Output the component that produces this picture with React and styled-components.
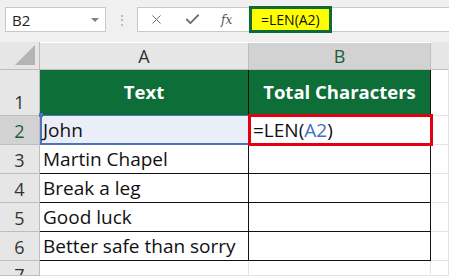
import React from "react";
import styled, { createGlobalStyle } from "styled-components";
import { X, Check } from "lucide-react";

const GlobalStyle = createGlobalStyle`
  html, body {
    margin: 0;
    padding: 0;
    background: #ffffff;
  }
  body {
    width: 449px;
    height: 276px;
    overflow: hidden;
    font-family: "Open Sans", "Liberation Sans", sans-serif;
  }
`;

const rows = [
  { n: 2, text: "John", active: true },
  { n: 3, text: "Martin Chapel" },
  { n: 4, text: "Break a leg" },
  { n: 5, text: "Good luck" },
  { n: 6, text: "Better safe than sorry" },
];

function App() {
  return (
    <Page>
      <GlobalStyle />
      <Toolbar>
        <NameBox>
          B2
          <Caret />
        </NameBox>
        <Dots>⋮</Dots>
        <FormulaBox>
          <ToolIcon>
            <X size={15} strokeWidth={1.6} />
          </ToolIcon>
          <ToolIcon>
            <Check size={17} strokeWidth={2.6} />
          </ToolIcon>
          <Fx>fx</Fx>
          <FormulaText>=LEN(A2)</FormulaText>
        </FormulaBox>
      </Toolbar>
      <Sheet>
        <Corner>
          <Triangle />
        </Corner>
        <ColHeader>A</ColHeader>
        <ColHeader selected>B</ColHeader>
        <ColHeader rest />

        <RowHeader>1</RowHeader>
        <HeadCell>Text</HeadCell>
        <HeadCell last>Total Characters</HeadCell>
        <Blank />

        {rows.map((r) => (
          <React.Fragment key={r.n}>
            <RowHeader selected={r.active}>{r.n}</RowHeader>
            {r.active ? (
              <RefCell>
                {r.text}
                <Handle />
              </RefCell>
            ) : (
              <Cell>{r.text}</Cell>
            )}
            {r.active ? (
              <EditCell>
                =LEN(<Ref>A2</Ref>)
              </EditCell>
            ) : (
              <Cell last />
            )}
            <Blank />
          </React.Fragment>
        ))}

        <RowHeader clipped>7</RowHeader>
        <Blank />
        <Blank />
        <Blank />
      </Sheet>
    </Page>
  );
}

export default App;

const Page = styled.div`
  width: 449px;
  height: 276px;
  display: flex;
  flex-direction: column;
  background: #f0f0f0;
  overflow: hidden;
`;

const Toolbar = styled.div`
  height: 42px;
  flex-shrink: 0;
  display: flex;
  align-items: flex-start;
  padding: 7px 0 0 5px;
  box-sizing: border-box;
`;

const NameBox = styled.div`
  width: 101px;
  height: 25px;
  box-sizing: border-box;
  background: #fff;
  border: 1px solid #c8c8c8;
  display: flex;
  align-items: center;
  padding-left: 6px;
  font-size: 15px;
  color: #222;
  position: relative;
`;

const Caret = styled.span`
  position: absolute;
  right: 6px;
  top: 10px;
  border-left: 4px solid transparent;
  border-right: 4px solid transparent;
  border-top: 4px solid #808080;
`;

const Dots = styled.div`
  width: 31px;
  text-align: center;
  color: #b0b0b0;
  font-size: 14px;
  line-height: 25px;
`;

const FormulaBox = styled.div`
  flex: 1;
  height: 25px;
  box-sizing: border-box;
  background: #fff;
  border: 1px solid #c8c8c8;
  border-right: none;
  display: flex;
  align-items: center;
  padding-left: 11px;
`;

const ToolIcon = styled.span`
  width: 35px;
  display: flex;
  align-items: center;
  color: #6f6f6f;
`;

const Fx = styled.span`
  font-family: "DejaVu Serif", "Liberation Serif", serif;
  font-style: italic;
  font-size: 12px;
  color: #555;
  width: 28px;
  padding-left: 2px;
`;

const FormulaText = styled.div`
  height: 27px;
  box-sizing: border-box;
  margin-top: -1px;
  background: #ffff00;
  border: 3px solid #0f6b36;
  padding: 0 9px 0 9px;
  display: flex;
  align-items: center;
  font-size: 14px;
  color: #111;
`;

const Sheet = styled.div`
  flex: 1;
  min-height: 0;
  overflow: hidden;
  display: grid;
  grid-template-columns: 40px 209px 182px 1fr;
  grid-template-rows: 28px 46px repeat(5, 29px) minmax(0, 1fr);
  font-family: "Open Sans", "Liberation Sans", sans-serif;
  background: #fff;
`;

const Corner = styled.div`
  background: #e6e6e6;
  border-right: 1px solid #bdbdbd;
  border-bottom: 1px solid #bdbdbd;
  position: relative;
`;

const Triangle = styled.div`
  position: absolute;
  right: 4px;
  bottom: 4px;
  width: 0;
  height: 0;
  border-left: 20px solid transparent;
  border-bottom: 20px solid #b4b4b4;
`;

const ColHeader = styled.div`
  background: ${(p) => (p.selected ? "#d2d2d2" : "#e6e6e6")};
  color: ${(p) => (p.selected ? "#1f5c3c" : "#333")};
  border-right: 1px solid ${(p) => (p.rest ? "transparent" : "#bdbdbd")};
  border-bottom: 1px solid #bdbdbd;
  display: flex;
  align-items: center;
  justify-content: center;
  font-size: 18px;
  margin-top: ${(p) => (p.rest ? "0" : "1px")};
`;

const RowHeader = styled.div`
  background: ${(p) => (p.selected ? "#d2d2d2" : "#e6e6e6")};
  color: ${(p) => (p.selected ? "#1f5c3c" : "#333")};
  border-right: 1px solid #bdbdbd;
  border-bottom: 1px solid #bdbdbd;
  display: flex;
  align-items: ${(p) => (p.clipped ? "flex-start" : "flex-end")};
  justify-content: center;
  padding-bottom: ${(p) => (p.clipped ? "0" : "1px")};
  padding-top: ${(p) => (p.clipped ? "2px" : "0")};
  overflow: hidden;
  font-size: 18px;
  line-height: 24px;
`;

const HeadCell = styled.div`
  background: #0d6e37;
  color: #fff;
  font-weight: 700;
  font-size: 18.5px;
  display: flex;
  align-items: center;
  justify-content: center;
  border-right: 1px solid #111;
  border-bottom: 1px solid #111;
  padding-bottom: 3px;
`;

const Cell = styled.div`
  font-size: 19px;
  color: #111;
  display: flex;
  align-items: center;
  padding-left: 3px;
  white-space: nowrap;
  overflow: hidden;
  border-right: 1px solid #111;
  border-bottom: 1px solid #111;
`;

const RefCell = styled(Cell)`
  background: #e9eef8;
  border: 1px solid #4a74b8;
  border-left-width: 2px;
  border-right: none;
  border-bottom-width: 2px;
  margin-top: -1px;
  padding-left: 1px;
  position: relative;
  overflow: visible;
`;

const Handle = styled.span`
  position: absolute;
  left: -3px;
  top: -3px;
  width: 4px;
  height: 4px;
  background: #4a74b8;
`;

const EditCell = styled.div`
  font-size: 19px;
  color: #111;
  display: flex;
  align-items: center;
  padding-left: 2px;
  border: 3px solid #e3000f;
  margin: -2px -2px -1px -1px;
  background: #fff;
  position: relative;
  z-index: 1;
`;

const Ref = styled.span`
  color: #3e6fc0;
`;

const Blank = styled.div`
  border-right: 1px solid #e4e4e4;
  border-bottom: 1px solid #e4e4e4;
`;
